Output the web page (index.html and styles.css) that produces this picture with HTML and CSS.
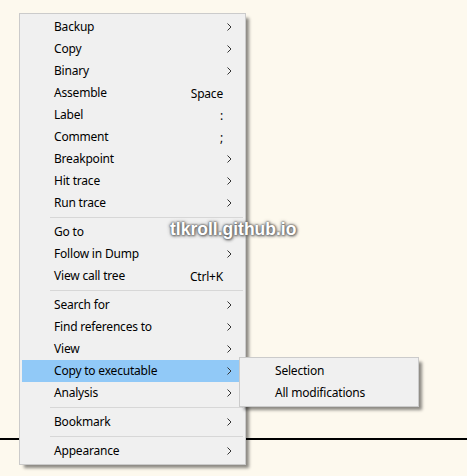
FILE: index.html
```html
<!DOCTYPE html>
<html>
<head>
<meta charset="utf-8">
<link rel="stylesheet" href="styles.css">
</head>
<body>
<div class="page">
  <div class="rule"></div>
</div>
<div class="menu">
  <div class="item"><span class="label">Backup</span><svg class="arrow" width="5" height="8" viewBox="0 0 5 8"><path d="M0.5 0.5 L4 4 L0.5 7.5" fill="none" stroke="#333" stroke-width="1"/></svg></div>
  <div class="item"><span class="label">Copy</span><svg class="arrow" width="5" height="8" viewBox="0 0 5 8"><path d="M0.5 0.5 L4 4 L0.5 7.5" fill="none" stroke="#333" stroke-width="1"/></svg></div>
  <div class="item"><span class="label">Binary</span><svg class="arrow" width="5" height="8" viewBox="0 0 5 8"><path d="M0.5 0.5 L4 4 L0.5 7.5" fill="none" stroke="#333" stroke-width="1"/></svg></div>
  <div class="item"><span class="label">Assemble</span><span class="key">Space</span></div>
  <div class="item"><span class="label">Label</span><span class="key">:</span></div>
  <div class="item"><span class="label">Comment</span><span class="key">;</span></div>
  <div class="item"><span class="label">Breakpoint</span><svg class="arrow" width="5" height="8" viewBox="0 0 5 8"><path d="M0.5 0.5 L4 4 L0.5 7.5" fill="none" stroke="#333" stroke-width="1"/></svg></div>
  <div class="item"><span class="label">Hit trace</span><svg class="arrow" width="5" height="8" viewBox="0 0 5 8"><path d="M0.5 0.5 L4 4 L0.5 7.5" fill="none" stroke="#333" stroke-width="1"/></svg></div>
  <div class="item"><span class="label">Run trace</span><svg class="arrow" width="5" height="8" viewBox="0 0 5 8"><path d="M0.5 0.5 L4 4 L0.5 7.5" fill="none" stroke="#333" stroke-width="1"/></svg></div>
  <div class="sep"></div>
  <div class="item"><span class="label">Go to</span><svg class="arrow" width="5" height="8" viewBox="0 0 5 8"><path d="M0.5 0.5 L4 4 L0.5 7.5" fill="none" stroke="#333" stroke-width="1"/></svg></div>
  <div class="item"><span class="label">Follow in Dump</span><svg class="arrow" width="5" height="8" viewBox="0 0 5 8"><path d="M0.5 0.5 L4 4 L0.5 7.5" fill="none" stroke="#333" stroke-width="1"/></svg></div>
  <div class="item"><span class="label">View call tree</span><span class="key">Ctrl+K</span></div>
  <div class="sep"></div>
  <div class="item"><span class="label">Search for</span><svg class="arrow" width="5" height="8" viewBox="0 0 5 8"><path d="M0.5 0.5 L4 4 L0.5 7.5" fill="none" stroke="#333" stroke-width="1"/></svg></div>
  <div class="item"><span class="label">Find references to</span><svg class="arrow" width="5" height="8" viewBox="0 0 5 8"><path d="M0.5 0.5 L4 4 L0.5 7.5" fill="none" stroke="#333" stroke-width="1"/></svg></div>
  <div class="item"><span class="label">View</span><svg class="arrow" width="5" height="8" viewBox="0 0 5 8"><path d="M0.5 0.5 L4 4 L0.5 7.5" fill="none" stroke="#333" stroke-width="1"/></svg></div>
  <div class="item active"><span class="label">Copy to executable</span><svg class="arrow" width="5" height="8" viewBox="0 0 5 8"><path d="M0.5 0.5 L4 4 L0.5 7.5" fill="none" stroke="#333" stroke-width="1"/></svg>
    <div class="menu submenu">
      <div class="item"><span class="label">Selection</span></div>
      <div class="item"><span class="label">All modifications</span></div>
    </div>
  </div>
  <div class="item"><span class="label">Analysis</span><svg class="arrow" width="5" height="8" viewBox="0 0 5 8"><path d="M0.5 0.5 L4 4 L0.5 7.5" fill="none" stroke="#333" stroke-width="1"/></svg></div>
  <div class="sep"></div>
  <div class="item"><span class="label">Bookmark</span><svg class="arrow" width="5" height="8" viewBox="0 0 5 8"><path d="M0.5 0.5 L4 4 L0.5 7.5" fill="none" stroke="#333" stroke-width="1"/></svg></div>
  <div class="sep"></div>
  <div class="item"><span class="label">Appearance</span><svg class="arrow" width="5" height="8" viewBox="0 0 5 8"><path d="M0.5 0.5 L4 4 L0.5 7.5" fill="none" stroke="#333" stroke-width="1"/></svg></div>
</div>
<div class="watermark">tlkroll.github.io</div>
</body>
</html>
```
FILE: styles.css
```css
html, body {
  margin: 0;
  padding: 0;
  background: #fdf9ee;
  width: 467px;
  height: 476px;
  overflow: hidden;
  font-family: "Noto Sans", "Open Sans", sans-serif;
  font-size: 12px;
  color: #000;
}
.page {
  padding-top: 438px;
}
.rule {
  height: 2px;
  background: #000;
}
.menu {
  position: absolute;
  left: 19px;
  top: 13px;
  width: 225px;
  padding: 2px 0;
  background: #f0f0f0;
  border: 1px solid #cbcbcb;
  box-shadow: 4px 4px 3px -1px rgba(0, 0, 0, 0.45);
  box-sizing: content-box;
}
.item {
  position: relative;
  display: flex;
  align-items: center;
  height: 22px;
  margin: 0 2px;
  padding-left: 32px;
  padding-right: 11px;
  letter-spacing: -0.2px;
}
.item.active {
  background: #91c9f7;
}
.label {
  flex: 1;
  white-space: nowrap;
  line-height: 22px;
}
.key {
  margin-right: 9px;
  white-space: nowrap;
}
.arrow {
  display: block;
  flex: none;
}
.sep {
  height: 1px;
  background: #d7d7d7;
  margin: 3px 2px 3px 30px;
}
.submenu {
  left: 217px;
  top: -3px;
  width: 178px;
  z-index: 2;
}
.submenu .item {
  padding-left: 33px;
}
.watermark {
  position: absolute;
  left: 170px;
  top: 219px;
  z-index: 5;
  font-family: "Liberation Sans", Arial, sans-serif;
  font-weight: bold;
  font-size: 17.5px;
  color: #fff;
  text-shadow: 0 0 2px #666, 0 0 2px #666, 0 0 4px #888, 1px 1px 3px #666;
}
```
